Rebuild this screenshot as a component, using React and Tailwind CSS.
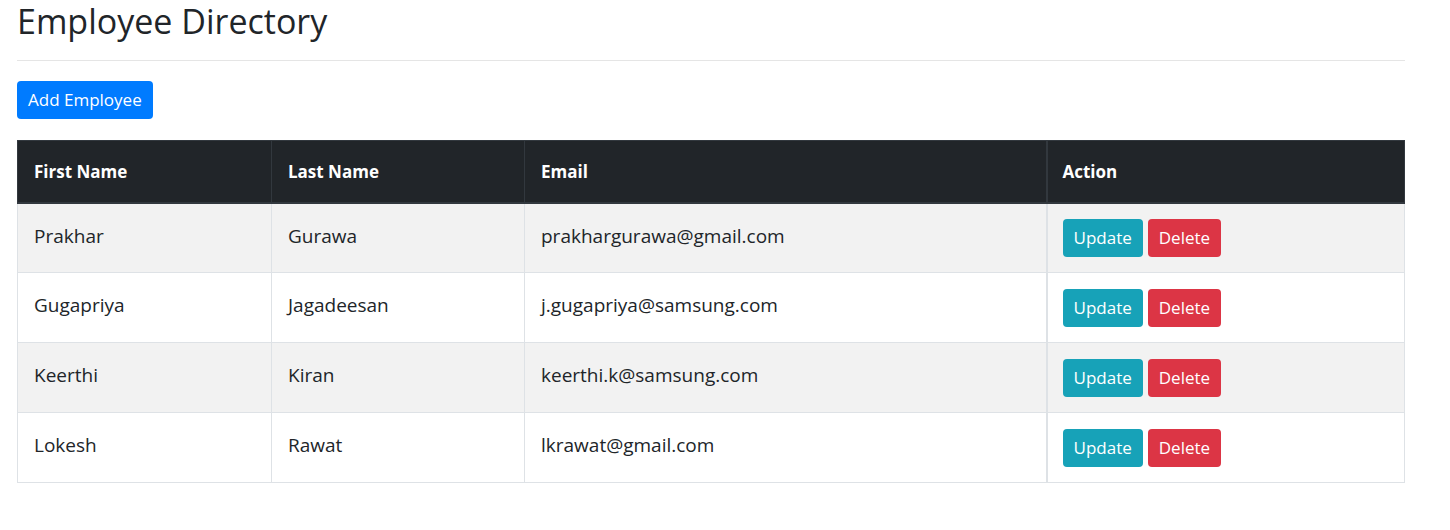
import React from "react";

const employees = [
  { first: "Prakhar", last: "Gurawa", email: "prakhargurawa@gmail.com" },
  { first: "Gugapriya", last: "Jagadeesan", email: "j.gugapriya@samsung.com" },
  { first: "Keerthi", last: "Kiran", email: "keerthi.k@samsung.com" },
  { first: "Lokesh", last: "Rawat", email: "lkrawat@gmail.com" },
];

export default function App() {
  return (
    <div
      className="min-h-screen bg-white px-[17px] text-[#212529]"
      style={{ fontFamily: '"Open Sans", "Noto Sans", sans-serif' }}
    >
      <div className="w-[1388px]">
        <h2 className="pt-[1px] text-[34px] font-medium leading-[40px]">Employee Directory</h2>
        <hr className="mt-[19px] border-t border-[#e5e5e5]" />
        <div className="mt-[20px]">
          <button className="h-[38px] rounded bg-[#007bff] px-[11px] text-[17px] text-white">
            Add Employee
          </button>
        </div>

        {/* Table */}
        <table className="mt-[21px] w-full table-fixed border-collapse border border-[#dee2e6] text-[19px]">
          <colgroup>
            <col className="w-[254px]" />
            <col className="w-[253px]" />
            <col className="w-[522px]" />
            <col />
          </colgroup>
          <thead>
            <tr className="bg-[#212529] text-left text-[17px] text-white">
              <th className="h-[62px] border border-b-2 border-[#32383e] px-4 font-bold">First Name</th>
              <th className="border border-b-2 border-[#32383e] px-4 font-bold">Last Name</th>
              <th className="border border-b-2 border-[#32383e] px-4 font-bold">Email</th>
              <th className="border border-b-2 border-l-2 border-[#32383e] pl-[15px] font-bold">Action</th>
            </tr>
          </thead>
          <tbody>
            {employees.map((e, i) => (
              <tr key={e.email} className={i % 2 === 0 ? "bg-[#f2f2f2]" : "bg-white"}>
                <td className="h-[70px] border border-[#dee2e6] px-4 pb-[4px]">{e.first}</td>
                <td className="border border-[#dee2e6] px-4 pb-[4px]">{e.last}</td>
                <td className="border border-[#dee2e6] px-4 pb-[4px]">{e.email}</td>
                <td className="border border-l-2 border-[#dee2e6] pl-[15px]">
                  <div className="flex gap-[5px]">
                    <button className="h-[38px] rounded bg-[#17a2b8] px-[11px] text-[17px] text-white">
                      Update
                    </button>
                    <button className="h-[38px] rounded bg-[#dc3545] px-[11px] text-[17px] text-white">
                      Delete
                    </button>
                  </div>
                </td>
              </tr>
            ))}
          </tbody>
        </table>
      </div>
    </div>
  );
}
